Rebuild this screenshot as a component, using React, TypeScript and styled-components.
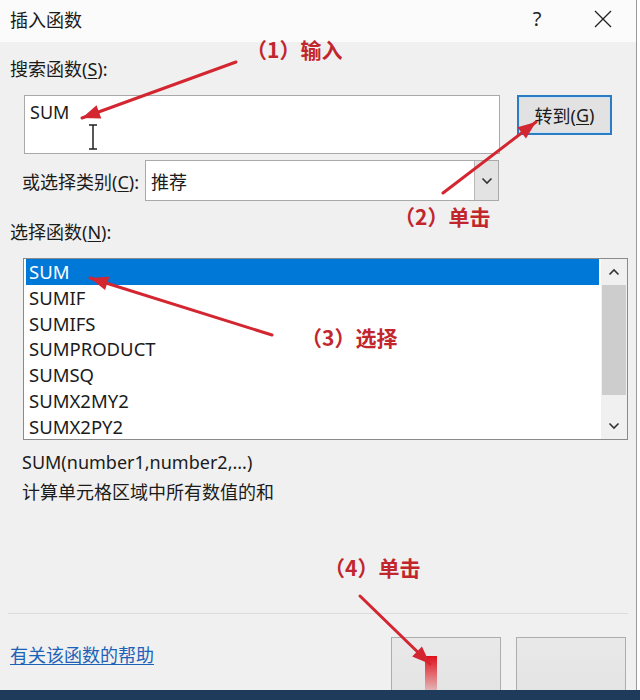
import styled, { createGlobalStyle } from 'styled-components';

const GlobalStyle = createGlobalStyle`
  html, body {
    margin: 0;
    padding: 0;
    background: #ffffff;
  }
  body {
    font-family: "Noto Sans", "Noto Sans CJK SC", sans-serif;
  }
`;

const Screen = styled.div`
  position: relative;
  width: 640px;
  height: 700px;
  overflow: hidden;
  display: flex;
  flex-direction: column;
  background: #ffffff;
`;

const Dialog = styled.div`
  width: 636px;
  height: 690px;
  border-right: 1px solid #9a9a9a;
  display: flex;
  flex-direction: column;
  background: #f0f0f0;
  color: #1b1b1b;
  font-size: 18px;
`;

const TitleBar = styled.div`
  height: 42px;
  flex: none;
  display: flex;
  align-items: center;
  padding-left: 10px;
  background: #fbfbfb;
  font-size: 18px;
  color: #1a1a1a;
`;

const TitleText = styled.div`
  flex: 1;
  margin-top: -5px;
`;

const TitleButton = styled.div`
  width: 66px;
  height: 42px;
  display: flex;
  align-items: center;
  justify-content: center;
  margin-top: -5px;
  font-size: 20px;
  color: #222;
`;

const Body = styled.div`
  flex: 1;
  display: flex;
  flex-direction: column;
`;

const Label = styled.div<{ $indent?: number; $top?: number }>`
  line-height: 24px;
  height: 24px;
  padding-left: ${(p) => p.$indent ?? 10}px;
  margin-top: ${(p) => p.$top ?? 0}px;
  white-space: nowrap;
`;

const Key = styled.span`
  text-decoration: underline;
  text-underline-offset: 2px;
`;

const SearchRow = styled.div`
  display: flex;
  align-items: flex-start;
  margin-top: 14px;
  padding-left: 24px;
  gap: 17px;
`;

const SearchBox = styled.div`
  position: relative;
  box-sizing: border-box;
  width: 476px;
  height: 59px;
  background: #ffffff;
  border: 1px solid #a9a9a9;
  padding: 4px 5px;
  line-height: 24px;
`;

const GoButton = styled.div`
  box-sizing: border-box;
  width: 95px;
  height: 40px;
  border: 2px solid #2c7cc4;
  background: #e2e2e2;
  display: flex;
  align-items: center;
  justify-content: center;
  box-shadow: inset 0 0 0 1px #cfe2f3;
`;

const CategoryRow = styled.div`
  display: flex;
  align-items: center;
  margin-top: 6px;
  padding-left: 22px;
`;

const Select = styled.div`
  box-sizing: border-box;
  margin-left: 6px;
  width: 354px;
  height: 41px;
  background: #ffffff;
  border: 1px solid #a9a9a9;
  display: flex;
  align-items: center;
`;

const SelectValue = styled.div`
  flex: 1;
  padding-left: 5px;
`;

const SelectArrow = styled.div`
  width: 23px;
  height: 39px;
  background: #e3e3e3;
  border-left: 1px solid #b8b8b8;
  display: flex;
  align-items: center;
  justify-content: center;
`;

const ListBox = styled.div`
  box-sizing: border-box;
  margin: 14px 0 0 23px;
  width: 605px;
  height: 182px;
  border: 1px solid #8a8a8a;
  background: #ffffff;
  display: flex;
`;

const Items = styled.div`
  flex: 1;
  padding: 0 2px;
`;

const Item = styled.div<{ $selected?: boolean }>`
  height: 25.8px;
  line-height: 25.8px;
  padding-left: 3px;
  font-size: 18.5px;
  background: ${(p) => (p.$selected ? '#0078d7' : 'transparent')};
  color: ${(p) => (p.$selected ? '#ffffff' : '#1b1b1b')};
`;

const ScrollBar = styled.div`
  width: 24px;
  padding: 0 1px;
  display: flex;
  flex-direction: column;
  background: #f0f0f0;
`;

const ScrollArrow = styled.div`
  height: 26px;
  display: flex;
  align-items: center;
  justify-content: center;
`;

const ScrollThumb = styled.div`
  height: 110px;
  background: #cdcdcd;
`;

const ScrollTrack = styled.div`
  flex: 1;
`;

const Desc = styled.div<{ $top: number }>`
  margin-top: ${(p) => p.$top}px;
  padding-left: 22px;
  line-height: 24px;
  height: 24px;
`;

const Separator = styled.div`
  margin: 109px 8px 0 8px;
  height: 1px;
  background: #dcdcdc;
`;

const Footer = styled.div`
  display: flex;
  align-items: flex-start;
  padding: 23px 10px 0 10px;
`;

const HelpLink = styled.a`
  margin-top: 6px;
  flex: 1;
  color: #1c63b8;
  text-decoration: underline;
  text-underline-offset: 2px;
  line-height: 24px;
`;

const FooterButton = styled.div<{ $gap?: number }>`
  width: 108px;
  height: 60px;
  margin-left: ${(p) => p.$gap ?? 0}px;
  border: 1px solid #adadad;
  background: linear-gradient(#e9e9e9, #e3e3e3);
`;

const Taskbar = styled.div`
  height: 10px;
  background: #1f3b5c;
  z-index: 1;
`;

const Overlay = styled.svg`
  position: absolute;
  left: 0;
  top: 0;
  pointer-events: none;
`;

const Note = styled.div<{ $x: number; $y: number }>`
  position: absolute;
  left: ${(p) => p.$x}px;
  top: ${(p) => p.$y}px;
  font-family: "Noto Sans CJK SC", sans-serif;
  font-weight: 700;
  font-size: 21px;
  line-height: 28px;
  color: #c2262d;
  white-space: nowrap;
`;

const Chevron = ({ up }: { up?: boolean }) => (
  <svg width="12" height="8" viewBox="0 0 12 8">
    <path
      d={up ? 'M1.5 6.5 L6 2 L10.5 6.5' : 'M1.5 1.5 L6 6 L10.5 1.5'}
      fill="none"
      stroke="#333"
      strokeWidth="1.6"
    />
  </svg>
);

const IBeam = styled.svg`
  position: absolute;
  left: 63px;
  top: 28px;
`;

const arrows = [
  { x1: 236, y1: 62, x2: 82, y2: 118 },
  { x1: 443, y1: 193, x2: 536, y2: 122 },
  { x1: 272, y1: 335, x2: 90, y2: 278 },
  { x1: 360, y1: 596, x2: 430, y2: 664 },
];

function head(a: { x1: number; y1: number; x2: number; y2: number }) {
  const dx = a.x2 - a.x1;
  const dy = a.y2 - a.y1;
  const len = Math.hypot(dx, dy);
  const ux = dx / len;
  const uy = dy / len;
  const bx = a.x2 - ux * 18;
  const by = a.y2 - uy * 18;
  const px = -uy * 7;
  const py = ux * 7;
  return `${a.x2},${a.y2} ${bx + px},${by + py} ${bx - px},${by - py}`;
}

const functions = ['SUM', 'SUMIF', 'SUMIFS', 'SUMPRODUCT', 'SUMSQ', 'SUMX2MY2', 'SUMX2PY2'];

export default function App() {
  return (
    <Screen>
      <GlobalStyle />
      <Dialog>
        <TitleBar>
          <TitleText>插入函数</TitleText>
          <TitleButton>?</TitleButton>
          <TitleButton>
            <svg width="18" height="18" viewBox="0 0 18 18">
              <path d="M1 1 L17 17 M17 1 L1 17" stroke="#222" strokeWidth="1.3" />
            </svg>
          </TitleButton>
        </TitleBar>
        <Body>
          <Label $top={15}>
            搜索函数(<Key>S</Key>):
          </Label>
          <SearchRow>
            <SearchBox>
              SUM
              <IBeam width="10" height="26" viewBox="0 0 10 26">
                <path d="M1 1 H9 M5 1 V25 M1 25 H9" stroke="#222" strokeWidth="1.5" fill="none" />
              </IBeam>
            </SearchBox>
            <GoButton>
              转到(<Key>G</Key>)
            </GoButton>
          </SearchRow>
          <CategoryRow>
            <span>
              或选择类别(<Key>C</Key>):
            </span>
            <Select>
              <SelectValue>推荐</SelectValue>
              <SelectArrow>
                <Chevron />
              </SelectArrow>
            </Select>
          </CategoryRow>
          <Label $top={19}>
            选择函数(<Key>N</Key>):
          </Label>
          <ListBox>
            <Items>
              {functions.map((f, i) => (
                <Item key={f} $selected={i === 0}>
                  {f}
                </Item>
              ))}
            </Items>
            <ScrollBar>
              <ScrollArrow>
                <Chevron up />
              </ScrollArrow>
              <ScrollThumb />
              <ScrollTrack />
              <ScrollArrow>
                <Chevron />
              </ScrollArrow>
            </ScrollBar>
          </ListBox>
          <Desc $top={10}>SUM(number1,number2,...)</Desc>
          <Desc $top={6}>计算单元格区域中所有数值的和</Desc>
          <Separator />
          <Footer>
            <HelpLink>有关该函数的帮助</HelpLink>
            <FooterButton />
            <FooterButton $gap={15} />
          </Footer>
        </Body>
      </Dialog>
      <Taskbar />
      <Overlay width="640" height="700" viewBox="0 0 640 700">
        <defs>
          <linearGradient id="smear" x1="0" y1="0" x2="0" y2="1">
            <stop offset="0" stopColor="#e0101a" />
            <stop offset="1" stopColor="#e0101a" stopOpacity="0" />
          </linearGradient>
        </defs>
        <rect x="425" y="656" width="12" height="44" fill="url(#smear)" />
        {arrows.map((a, i) => (
          <g key={i}>
            <line x1={a.x1} y1={a.y1} x2={a.x2} y2={a.y2} stroke="#d32630" strokeWidth="3" strokeLinecap="round" />
            <polygon points={head(a)} fill="#d32630" />
          </g>
        ))}
      </Overlay>
      <Note $x={246} $y={35}>（1）输入</Note>
      <Note $x={394} $y={202}>（2）单击</Note>
      <Note $x={301} $y={323}>（3）选择</Note>
      <Note $x={324} $y={553}>（4）单击</Note>
    </Screen>
  );
}
